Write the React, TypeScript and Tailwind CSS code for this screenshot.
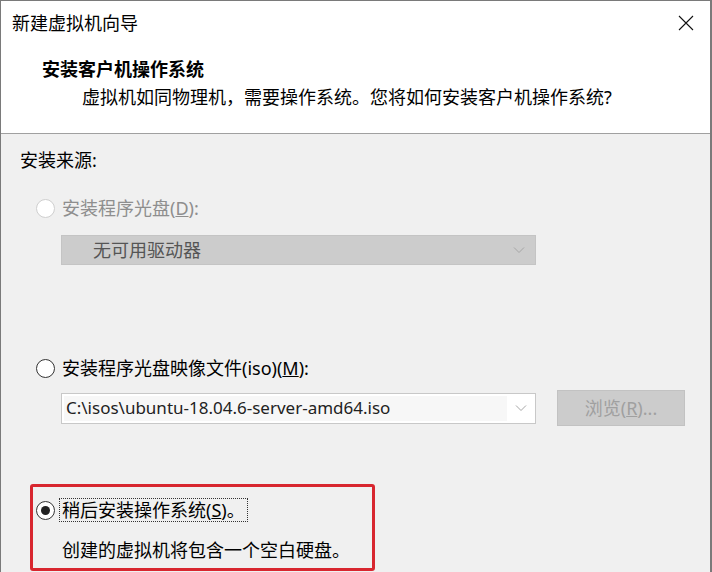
import type { ReactNode } from 'react'

const font = { fontFamily: '"Noto Sans", "Noto Sans CJK SC", sans-serif' }

const Chevron = () => (
    <svg width="12" height="8" viewBox="0 0 12 8" className="shrink-0">
        <polyline points="1,1.5 6,6.5 11,1.5" fill="none" stroke="#a6a6a6" strokeWidth="1" />
    </svg>
)

const Radio = ({ checked, disabled }: { checked?: boolean; disabled?: boolean }) => (
    <div
        className={`w-[19px] h-[19px] rounded-full border shrink-0 flex items-center justify-center ${
            disabled ? 'border-[#cfcfcf] bg-white' : 'border-[#333333] bg-white'
        }`}
    >
        {checked && <div className="w-[9px] h-[9px] rounded-full bg-[#222222]" />}
    </div>
)

const RadioRow = ({
    checked,
    disabled,
    focused,
    children,
}: {
    checked?: boolean
    disabled?: boolean
    focused?: boolean
    children: ReactNode
}) => (
    <div className="flex items-center h-[24px]">
        <Radio checked={checked} disabled={disabled} />
        <div
            className={`ml-[4px] px-[2px] leading-[22px] border border-dotted ${
                focused ? 'border-[#333333]' : 'border-transparent'
            } ${disabled ? 'text-[#8e8e8e]' : 'text-black'}`}
        >
            {children}
        </div>
    </div>
)

export default function App() {
    return (
        <div
            style={font}
            className="w-[712px] h-[572px] overflow-hidden flex flex-col border-l border-t border-r-2 border-[#7a7a7a] text-[18px] text-black"
        >
            <header className="h-[133px] shrink-0 bg-white border-b border-[#a0a0a0] flex flex-col">
                <div className="flex items-center justify-between h-[24px] mt-[10px] pl-[11px] pr-[16px]">
                    <span className="leading-[24px]">新建虚拟机向导</span>
                    <svg width="16" height="16" viewBox="0 0 16 16">
                        <path d="M1 1L15 15M15 1L1 15" stroke="#111111" strokeWidth="1.1" />
                    </svg>
                </div>
                <div className="mt-[22px] pl-[41px] leading-[24px] font-bold">安装客户机操作系统</div>
                <div className="mt-[4px] pl-[81px] leading-[24px]">
                    虚拟机如同物理机，需要操作系统。您将如何安装客户机操作系统?
                </div>
            </header>

            <main className="flex-1 bg-[#f0f0f0] flex flex-col">
                <div className="mt-[14px] pl-[19px] leading-[24px]">安装来源:</div>

                <div className="mt-[24px] pl-[35px]">
                    <RadioRow disabled>
                        安装程序光盘(<span className="underline">D</span>):
                    </RadioRow>
                </div>

                <div className="mt-[15px] ml-[60px] w-[475px] h-[30px] bg-[#cccccc] border border-[#c4c4c4] flex items-center justify-between pl-[31px] pr-[10px]">
                    <span className="text-[#555555] leading-[24px]">无可用驱动器</span>
                    <Chevron />
                </div>

                <div className="mt-[91px] pl-[35px]">
                    <RadioRow>
                        安装程序光盘映像文件(iso)(<span className="underline">M</span>):
                    </RadioRow>
                </div>

                <div className="mt-[10px] ml-[60px] h-[36px] flex items-center gap-[21px]">
                    <div className="w-[475px] h-[31px] bg-white border border-[#c8c8c8] flex items-stretch">
                        <div className="flex-1 m-[2px] mr-0 bg-[#f7f7f7] flex items-center pl-[2px] text-[#222222] text-[17px] leading-[24px]">
                            C:\isos\ubuntu-18.04.6-server-amd64.iso
                        </div>
                        <div className="w-[28px] flex items-center justify-center">
                            <Chevron />
                        </div>
                    </div>
                    <div className="w-[128px] h-[36px] bg-[#cccccc] border border-[#c2c2c2] flex items-center justify-center text-[#a0a0a0] leading-[24px]">
                        浏览(<span className="underline">R</span>)...
                    </div>
                </div>

                <div className="mt-[58px] ml-[29px] w-[345px] h-[87px] shrink-0 border-[3px] border-[#d8262f] rounded-[3px] flex flex-col">
                    <div className="mt-[11px] pl-[3px]">
                        <RadioRow checked focused>
                            稍后安装操作系统(<span className="underline">S</span>)。
                        </RadioRow>
                    </div>
                    <div className="mt-[16px] pl-[29px] leading-[24px]">创建的虚拟机将包含一个空白硬盘。</div>
                </div>
            </main>
        </div>
    )
}
